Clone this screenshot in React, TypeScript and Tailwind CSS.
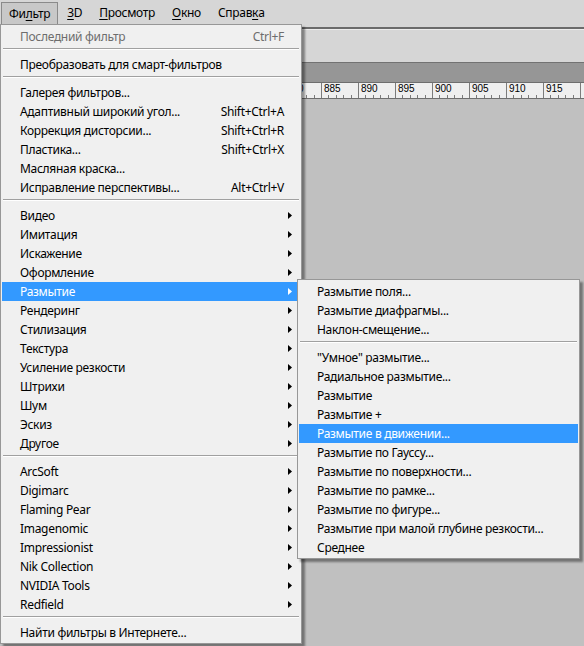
type Item =
  | { sep: true }
  | { sep?: false; label: string; shortcut?: string; arrow?: boolean; disabled?: boolean; active?: boolean }

const SEP: Item = { sep: true }

const mainItems: Item[] = [
  { label: 'Последний фильтр', shortcut: 'Ctrl+F', disabled: true },
  SEP,
  { label: 'Преобразовать для смарт-фильтров' },
  SEP,
  { label: 'Галерея фильтров...' },
  { label: 'Адаптивный широкий угол...', shortcut: 'Shift+Ctrl+A' },
  { label: 'Коррекция дисторсии...', shortcut: 'Shift+Ctrl+R' },
  { label: 'Пластика...', shortcut: 'Shift+Ctrl+X' },
  { label: 'Масляная краска...' },
  { label: 'Исправление перспективы...', shortcut: 'Alt+Ctrl+V' },
  SEP,
  { label: 'Видео', arrow: true },
  { label: 'Имитация', arrow: true },
  { label: 'Искажение', arrow: true },
  { label: 'Оформление', arrow: true },
  { label: 'Размытие', arrow: true, active: true },
  { label: 'Рендеринг', arrow: true },
  { label: 'Стилизация', arrow: true },
  { label: 'Текстура', arrow: true },
  { label: 'Усиление резкости', arrow: true },
  { label: 'Штрихи', arrow: true },
  { label: 'Шум', arrow: true },
  { label: 'Эскиз', arrow: true },
  { label: 'Другое', arrow: true },
  SEP,
  { label: 'ArcSoft', arrow: true },
  { label: 'Digimarc', arrow: true },
  { label: 'Flaming Pear', arrow: true },
  { label: 'Imagenomic', arrow: true },
  { label: 'Impressionist', arrow: true },
  { label: 'Nik Collection', arrow: true },
  { label: 'NVIDIA Tools', arrow: true },
  { label: 'Redfield', arrow: true },
  SEP,
  { label: 'Найти фильтры в Интернете...' },
]

const blurItems: Item[] = [
  { label: 'Размытие поля...' },
  { label: 'Размытие диафрагмы...' },
  { label: 'Наклон-смещение...' },
  SEP,
  { label: '"Умное" размытие...' },
  { label: 'Радиальное размытие...' },
  { label: 'Размытие' },
  { label: 'Размытие +' },
  { label: 'Размытие в движении...', active: true },
  { label: 'Размытие по Гауссу...' },
  { label: 'Размытие по поверхности...' },
  { label: 'Размытие по рамке...' },
  { label: 'Размытие по фигуре...' },
  { label: 'Размытие при малой глубине резкости...' },
  { label: 'Среднее' },
]

// last tick sits at the right edge, its label is off-screen
const rulerLabels = ['880', '885', '890', '895', '900', '905', '910', '915', '']

function Arrow({ white }: { white?: boolean }) {
  return (
    <svg width="4" height="7" viewBox="0 0 4 7" className="shrink-0">
      <polygon points="0,0 4,3.5 0,7" fill={white ? '#fff' : '#000'} />
    </svg>
  )
}

function MenuList({ items }: { items: Item[] }) {
  return (
    <>
      {items.map((it, i) =>
        it.sep ? (
          <div key={i} className="h-[9px] pt-[2px] px-[1px]">
            <div className="h-px bg-[#a0a0a0]" />
            <div className="h-px bg-white" />
          </div>
        ) : (
          <div
            key={i}
            className={`h-[19px] flex items-center pl-[18px] pr-[8px] leading-[19px] whitespace-nowrap ${
              it.active ? 'bg-[#3399ff] text-white' : it.disabled ? 'text-[#6d6d6d]' : 'text-black'
            }`}
          >
            <span className="flex-1">{it.label}</span>
            {it.shortcut && <span className="mr-[8px]">{it.shortcut}</span>}
            {it.arrow && <Arrow white={it.active} />}
          </div>
        )
      )}
    </>
  )
}

function MenuBarItem({ pre, u, post, open }: { pre: string; u: string; post: string; open?: boolean }) {
  return (
    <div
      className={`h-[22px] px-[7px] flex items-center border ${
        open ? 'bg-[#c8c8c8] border-[#8a8a8a] border-b-0' : 'border-transparent'
      }`}
    >
      {pre}
      <span className="underline underline-offset-2">{u}</span>
      {post}
    </div>
  )
}

export default function App() {
  return (
    <div className="relative w-[584px] h-[646px] overflow-hidden flex flex-col bg-[#c0c0c0] font-['Noto_Sans',sans-serif] text-[12px] tracking-[-0.3px] text-black">
      {/* Menu bar */}
      <div className="h-[27px] bg-[#d6d6d6] flex items-start pt-[2px] pl-[1px] gap-[1px]">
        <MenuBarItem pre="Фи" u="л" post="ьтр" open />
        <MenuBarItem pre="" u="3" post="D" />
        <MenuBarItem pre="" u="П" post="росмотр" />
        <MenuBarItem pre="" u="О" post="кно" />
        <MenuBarItem pre="Справ" u="к" post="а" />
      </div>
      <div className="h-[2px] bg-[#6b6b6b]" />

      {/* Options strip */}
      <div className="h-[33px] bg-[#d6d6d6] border-t border-[#ececec]" />
      <div className="h-px bg-[#727272]" />

      {/* Document tab bar */}
      <div className="h-[19px] bg-[#969696]" />

      {/* Ruler */}
      <div className="h-[17px] bg-[#efefef] border-y border-[#6e6e6e] flex pl-[284px] overflow-hidden font-['Liberation_Sans',sans-serif] tracking-normal">
        {rulerLabels.map((n, i) => (
          <div key={i} className="w-[37px] shrink-0 border-l border-[#7c7c7c] flex flex-col justify-between">
            <span className="h-[10px] text-[10px] leading-none pl-[2px] pt-[1px]">{n}</span>
            <div className="flex h-[3px]">
              <div className="flex-1" />
              <div className="flex-1 border-l border-[#7c7c7c]" />
              <div className="flex-1 border-l border-[#7c7c7c]" />
              <div className="flex-1 border-l border-[#7c7c7c]" />
              <div className="flex-1 border-l border-[#7c7c7c]" />
            </div>
          </div>
        ))}
      </div>

      {/* Canvas area */}
      <div className="flex-1 bg-[#c0c0c0]" />

      {/* Filter menu */}
      <div className="absolute left-0 top-[24px] w-[302px] bg-[#f0f0f0] border border-[#979797] pt-[2px] pb-px px-px shadow-[3px_3px_2px_rgba(0,0,0,0.4)]">
        <MenuList items={mainItems} />
      </div>

      {/* Blur submenu */}
      <div className="absolute left-[297px] top-[279px] w-[283px] bg-[#f0f0f0] border border-[#979797] pt-[2px] pb-px px-px shadow-[3px_3px_2px_rgba(0,0,0,0.4)]">
        <MenuList items={blurItems} />
      </div>
    </div>
  )
}
